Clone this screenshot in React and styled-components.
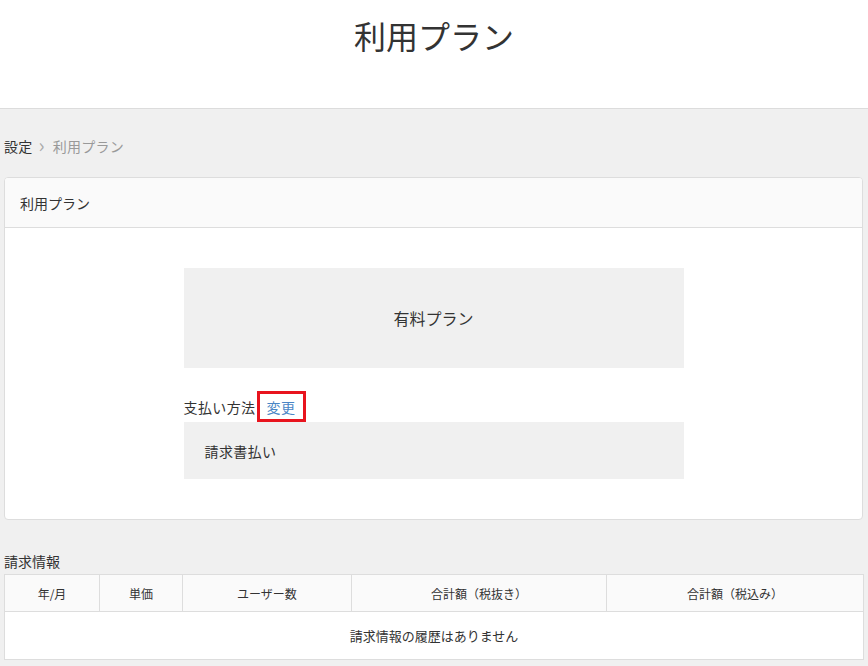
import React from "react";
import styled, { createGlobalStyle } from "styled-components";

const columns = ["年/月", "単価", "ユーザー数", "合計額（税抜き）", "合計額（税込み）"];
const widths = [95, 83, 169, 255, 257];

const App = () => {
  return (
    <>
      <GlobalStyle />
      <StHeader>
        <StTitle>利用プラン</StTitle>
      </StHeader>
      <StMain>
        <StBreadcrumb>
          <StCrumb>設定</StCrumb>
          <StChevron>›</StChevron>
          <StCrumb $current>利用プラン</StCrumb>
        </StBreadcrumb>

        <StCard>
          <StCardHeader>利用プラン</StCardHeader>
          <StCardBody>
            <StPlanBox>有料プラン</StPlanBox>
            <StPayLabel>
              支払い方法
              <StChangeLink href="#">変更</StChangeLink>
            </StPayLabel>
            <StPayBox>請求書払い</StPayBox>
          </StCardBody>
        </StCard>

        <StSectionTitle>請求情報</StSectionTitle>
        <StTable>
          <colgroup>
            {widths.map((w, i) => (
              <col key={i} style={{ width: w }} />
            ))}
          </colgroup>
          <thead>
            <tr>
              {columns.map((c) => (
                <StTh key={c}>{c}</StTh>
              ))}
            </tr>
          </thead>
          <tbody>
            <tr>
              <StEmptyCell colSpan={5}>請求情報の履歴はありません</StEmptyCell>
            </tr>
          </tbody>
        </StTable>
      </StMain>
    </>
  );
};

export default App;

const GlobalStyle = createGlobalStyle`
  * {
    margin: 0;
    padding: 0;
    box-sizing: border-box;
  }

  body {
    font-family: "Noto Sans CJK JP", "Noto Sans", sans-serif;
    color: #333;
    background: #f0f0f0;
  }
`;

const StHeader = styled.header`
  height: 109px;
  background: #fff;
  border-bottom: 1px solid #dcdcdc;
  display: flex;
  justify-content: center;
  padding-top: 12px;
`;

const StTitle = styled.h1`
  font-size: 32px;
  font-weight: 400;
  line-height: 46px;
  color: #333;
`;

const StMain = styled.main`
  padding: 0 5px 0 4px;
`;

const StBreadcrumb = styled.nav`
  display: flex;
  align-items: center;
  height: 68px;
  padding-top: 6px;
  font-size: 14px;
`;

const StCrumb = styled.span`
  color: ${(p) => (p.$current ? "#999" : "#333")};
  letter-spacing: 0.3px;
`;

const StChevron = styled.span`
  color: #aaa;
  font-size: 20px;
  line-height: 20px;
  margin: -2px 8px 0 6px;
`;

const StCard = styled.section`
  background: #fff;
  border: 1px solid #ddd;
  border-radius: 4px;
  overflow: hidden;
`;

const StCardHeader = styled.div`
  height: 50px;
  background: #fafafa;
  border-bottom: 1px solid #ddd;
  display: flex;
  align-items: center;
  padding-left: 15px;
  font-size: 14px;
`;

const StCardBody = styled.div`
  width: 500px;
  margin: 0 auto;
  padding: 40px 0 40px 0;
`;

const StPlanBox = styled.div`
  height: 100px;
  background: #f0f0f0;
  display: flex;
  align-items: center;
  justify-content: center;
  font-size: 16px;
`;

const StPayLabel = styled.div`
  margin-top: 23px;
  height: 31px;
  display: flex;
  align-items: center;
  font-size: 14px;
  letter-spacing: 0.4px;
`;

const StChangeLink = styled.a`
  color: #4a86c5;
  text-decoration: none;
  border: 3px solid #e8141e;
  padding: 0 7px 0 7px;
  height: 31px;
  display: flex;
  align-items: center;
  margin-left: 1px;
  letter-spacing: 0.5px;
`;

const StPayBox = styled.div`
  height: 57px;
  background: #f0f0f0;
  display: flex;
  align-items: center;
  padding-left: 21px;
  font-size: 14px;
  letter-spacing: 0.4px;
`;

const StSectionTitle = styled.h2`
  font-size: 14px;
  font-weight: 400;
  margin-top: 28px;
  height: 26px;
  display: flex;
  align-items: center;
`;

const StTable = styled.table`
  width: 100%;
  table-layout: fixed;
  border-collapse: collapse;
  background: #fff;
  border: 1px solid #ddd;
  font-size: 12px;
`;

const StTh = styled.th`
  height: 37px;
  background: #fafafa;
  font-weight: 400;
  border: 1px solid #ddd;
  text-align: center;
`;

const StEmptyCell = styled.td`
  height: 48px;
  text-align: center;
  font-size: 13px;
`;
